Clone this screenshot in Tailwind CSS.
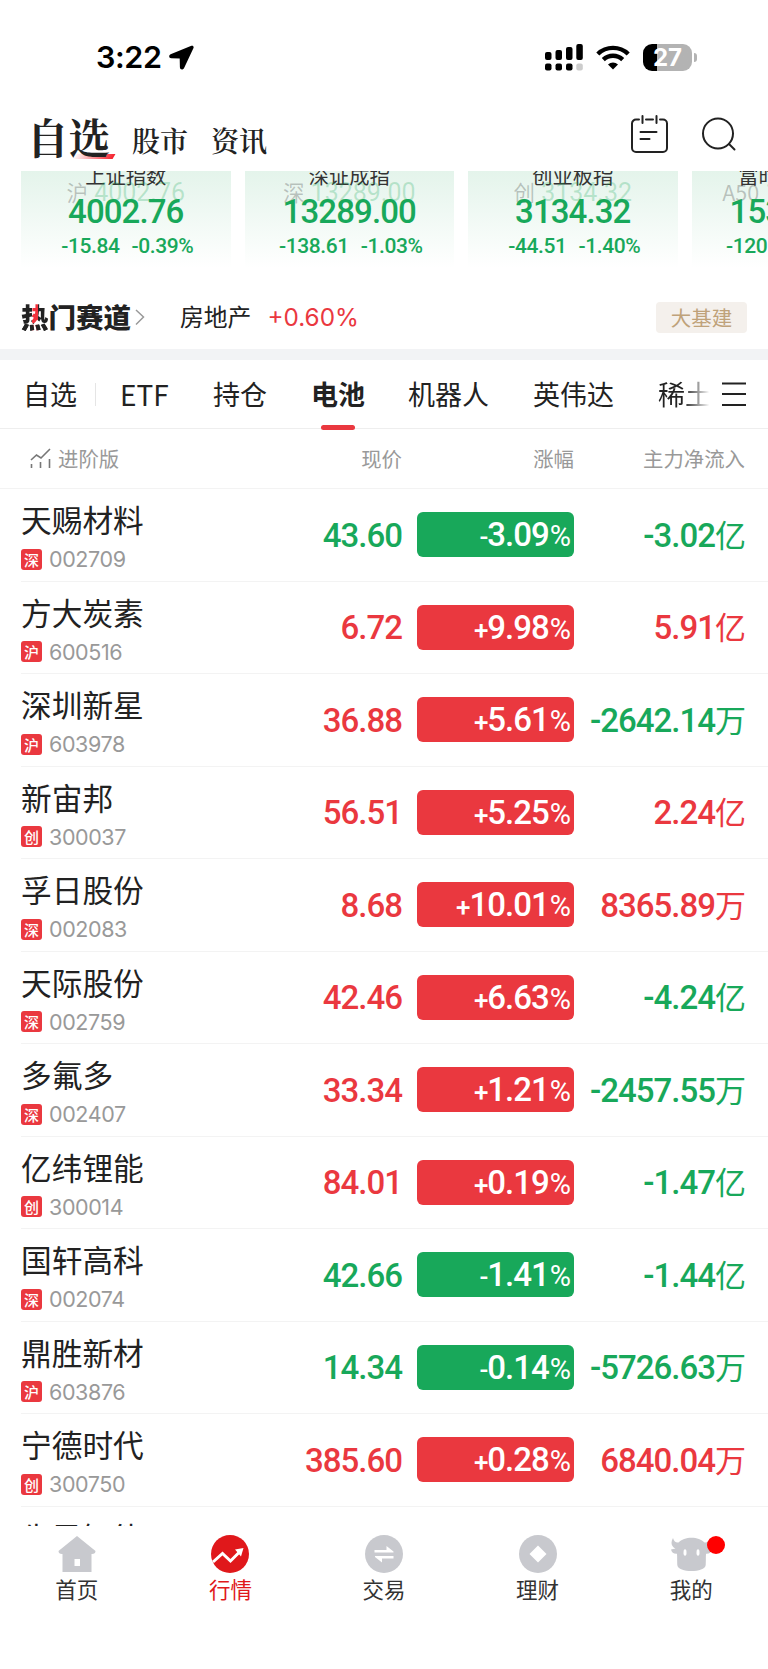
<!DOCTYPE html>
<html lang="zh-CN">
<head>
    <meta charset="UTF-8">
    <meta name="viewport" content="width=device-width, initial-scale=1.0">
    <title>行情 - 自选</title>
    <script src="https://cdn.jsdelivr.net/npm/@tailwindcss/browser@4"></script>
</head>
<body class="bg-white text-[#222] font-['Noto_Sans_CJK_SC',sans-serif] w-[768px] h-[1669px] overflow-hidden flex flex-col">

    <!-- status bar -->
    <div class="h-[100px] shrink-0 flex items-start justify-between pl-[96px] pr-[71px] pt-[41px] text-black">
        <div class="flex items-center gap-[7px] h-[32px]">
            <span class="font-['Inter',sans-serif] font-semibold text-[30.5px] leading-[32px] tracking-[-0.4px]">3:22</span>
            <svg class="w-[25px] h-[25px]" viewBox="0 0 25 25"><path d="M22.4.8 1.6 9.2c-2.200 1-1.700 4 .6 4.100l8.500.2.200 8.700c.1 2.600 3 3.100 4.200.8L24.500 3C25 1.200 23.900.2 22.400.8z" fill="#000"/></svg>
        </div>
        <div class="flex items-center gap-[13px] h-[32px]">
            <svg class="w-[38px] h-[27px]" viewBox="0 0 38 27">
                <rect x="0" y="8" width="6.5" height="8" rx="2"/><rect x="10.5" y="6" width="6.5" height="10" rx="2"/><rect x="21" y="3" width="6.5" height="13" rx="2"/><rect x="31.3" y="0" width="6.5" height="16" rx="2"/>
                <rect x="0" y="19.5" width="6.5" height="7" rx="2"/><rect x="10.5" y="19.5" width="6.5" height="7" rx="2"/><rect x="21" y="19.5" width="6.5" height="7" rx="2"/><rect x="31.3" y="19.5" width="6.5" height="7" rx="2" fill="#ccc"/>
            </svg>
            <svg class="w-[34px] h-[25px]" viewBox="0 0 34 25" fill="none" stroke="#000" stroke-width="4.4">
                <path d="M1.8 9a22 22 0 0 1 30.4 0"/><path d="M7.3 14.700a14 14 0 0 1 19.4 0"/><path d="M17 24.500l-5-5a7.300 7.300 0 0 1 10 0z" fill="#000" stroke="none"/>
            </svg>
            <div class="flex items-center gap-[2px]">
                <div class="w-[49px] h-[27px] rounded-[9px] bg-linear-to-r from-black from-[28%] to-[#b3b3b3] to-[28%] text-white font-['Inter',sans-serif] font-bold text-[24px] leading-[27px] text-center">27</div>
                <div class="w-[3px] h-[9px] rounded-r-full bg-[#b3b3b3]"></div>
            </div>
        </div>
    </div>

    <!-- page header -->
    <header class="h-[71px] shrink-0 flex justify-between pl-[27px] pr-[32px] font-['Noto_Serif_CJK_SC','Noto_Serif_SC','Noto_Sans_CJK_SC',serif]">
        <div class="flex items-end gap-[22px] h-[58px]">
            <div class="relative">
                <div class="absolute right-[-4px] bottom-[-1px] w-[40px] h-[5px] bg-linear-to-r from-transparent to-[#f5222d] skew-x-[-30deg]"></div>
                <span class="relative block text-[41.5px] leading-[44px] font-bold">自选</span>
            </div>
            <span class="text-[28px] leading-[36px] font-semibold">股市</span>
            <span class="text-[28px] leading-[36px] font-semibold ml-px">资讯</span>
        </div>
        <div class="flex items-start gap-[34px] pt-[15px]">
            <svg class="w-[37px] h-[38px]" viewBox="0 0 37 38" fill="none" stroke="#222" stroke-width="2" stroke-linecap="round">
                <path d="M8 4.500H5a4 4 0 0 0-4 4V33a4 4 0 0 0 4 4h27a4 4 0 0 0 4-4V8.500a4 4 0 0 0-4-4h-3M15 4.500h7M11.500 1v7M25.500 1v7M9.500 17h16M9.500 24h9"/>
            </svg>
            <svg class="w-[34px] h-[38px]" viewBox="0 0 34 38" fill="none" stroke="#222" stroke-width="2" stroke-linecap="round">
                <circle cx="16" cy="18.5" r="15"/><path d="M27 29l5.500 5.500"/>
            </svg>
        </div>
    </header>

    <!-- index cards, scrolled partly under the header -->
    <section id="indexes" class="h-[97px] shrink-0 flex gap-[14px] pl-[21px] overflow-hidden"></section>

    <!-- hot track -->
    <section class="h-[81px] shrink-0 flex items-center pl-[21px] pr-[21px] pt-[17px]">
        <h2 class="text-[27.5px] leading-[36px] font-black mt-[-2px]"><span class="bg-[linear-gradient(#0000_68%,#222_68%),linear-gradient(90deg,#222_38%,#f0323c_38%_60%,#222_60%)] bg-clip-text text-transparent">热</span>门赛道</h2>
        <svg class="w-[10px] h-[18px] ml-[4px]" viewBox="0 0 10 18" fill="none" stroke="#999" stroke-width="1.5"><path d="M1 2l7.500 7L1 16.500"/></svg>
        <span class="ml-[35px] mt-[-2px] text-[23.8px]">房地产</span>
        <span class="ml-[16px] font-['Inter',sans-serif] text-[24.3px] text-[#ea383f]">+0.60%</span>
        <span class="ml-auto w-[91px] h-[31px] rounded-[4px] bg-[#f4f0ec] text-[#bfa27a] text-[20.5px] leading-[31px] text-center">大基建</span>
    </section>
    <div class="h-[11px] shrink-0 bg-[#f2f3f5]"></div>

    <!-- group tabs -->
    <nav class="h-[69px] shrink-0 flex items-center pl-[23px] pr-[22px] border-b border-[#eee] text-[27px] whitespace-nowrap">
        <span>自选</span>
        <i class="w-px h-[23px] bg-[#e5e5e5] ml-[18px] mr-[24px]"></i>
        <span class="w-[93px] text-[28px]">ETF</span>
        <span class="mr-[44px]">持仓</span>
        <span class="relative font-bold mr-[43px]">电池<i class="absolute left-[10px] bottom-[-16px] w-[34px] h-[5px] rounded-full bg-[#ea383f]"></i></span>
        <span class="mr-[44px]">机器人</span>
        <span class="mr-[44px]">英伟达</span>
        <span class="w-[54px] bg-linear-to-r from-[#222] from-45% to-white to-95% bg-clip-text text-transparent">稀土</span>
        <svg class="w-[24px] h-[24px] ml-auto" viewBox="0 0 24 24" stroke="#222" stroke-width="2"><path d="M0 1.500h24M0 12h24M0 23h24"/></svg>
    </nav>

    <!-- column titles -->
    <div class="h-[60px] shrink-0 grid grid-cols-[381px_172px_171px] items-center pl-[21px] border-b border-[#f3f3f3] text-[20.4px] text-[#999]">
        <div class="flex items-center justify-between">
            <span class="flex items-center gap-[7px] pl-[9px]">
                <svg class="w-[21px] h-[20px]" viewBox="0 0 21 20" fill="none" stroke="#777" stroke-width="1.6"><path d="M1 12l5.500-5 4.500 3 9-9M1.500 16v4M10.500 14v6M19.500 11v9"/></svg>进阶版
            </span>
            <span>现价</span>
        </div>
        <span class="text-right">涨幅</span>
        <span class="text-right">主力净流入</span>
    </div>

    <main id="stocks" class="h-[1037px] shrink-0 overflow-hidden"></main>

    <!-- bottom navigation -->
    <footer class="grow grid grid-cols-5 text-[21.5px] leading-[31px] text-[#333] text-center">
        <a class="flex flex-col items-center pt-[9px]">
            <svg class="w-[38px] h-[38px]" viewBox="0 0 38 38" fill="#c8c9ce"><path fill-rule="evenodd" d="M19 1L.5 16q0 3 3.500 3h.5v18h29V19h.5q3.500 0 3.500-3zM16.500 24h5.500v7h-5.500z"/></svg>
            首页
        </a>
        <a class="flex flex-col items-center pt-[9px] text-[#e0181b]">
            <svg class="w-[38px] h-[38px]" viewBox="0 0 38 38"><circle cx="19" cy="19" r="19" fill="#e0181b"/><path d="M2 27l9.500-8.500 8 7.500L29 16.500" fill="none" stroke="#fff" stroke-width="3"/><path d="M24 14.500L32.500 13l-2.500 8.500z" fill="#fff"/></svg>
            行情
        </a>
        <a class="flex flex-col items-center pt-[9px]">
            <svg class="w-[38px] h-[38px]" viewBox="0 0 38 38"><circle cx="19" cy="19" r="19" fill="#c8c9ce"/><path d="M9.500 15h12V11l7 5.500v1h-19zM28.500 23.500h-11.500v4l-7-5.500v-1h18.500z" fill="#fff"/></svg>
            交易
        </a>
        <a class="flex flex-col items-center pt-[9px]">
            <svg class="w-[38px] h-[38px]" viewBox="0 0 38 38"><circle cx="19" cy="19" r="19" fill="#c8c9ce"/><path d="M19 10.500l8.500 8.500-8.500 8.500-8.500-8.500z" fill="#fff"/></svg>
            理财
        </a>
        <a class="flex flex-col items-center pt-[9px]">
            <span class="relative">
                <svg class="w-[41px] h-[38px]" viewBox="0 0 41 38"><path d="M2 3C-.5 7 0 11.500 4.500 13.500L0 14.500c.5 3 3 4.500 6 4.200.3 4 0 6 .3 11.300C7 38 34 38 34.700 30c.3-5.300 0-7.300.3-11.300 3 .3 5.500-1.200 6-4.200l-4.500-1C41 11.500 41.500 7 39 3c-1 3.500-3 5-5.500 4.500C28 1 13 1 7.500 7.500 5 8 3 6.500 2 3z" fill="#c8c9ce"/><ellipse cx="14" cy="17.500" rx="1.500" ry="3.200" fill="#fff"/><ellipse cx="27" cy="17.500" rx="1.500" ry="3.200" fill="#fff"/></svg>
                <i class="absolute left-[36px] top-[1px] w-[18px] h-[18px] rounded-full bg-[#ff0000]"></i>
            </span>
            我的
        </a>
    </footer>

    <script>
        const indexes = [
            ["上证指数", "沪", "4002.76", "-15.84", "-0.39%"],
            ["深证成指", "深", "13289.00", "-138.61", "-1.03%"],
            ["创业板指", "创", "3134.32", "-44.51", "-1.40%"],
            ["富时中国A50", "A50", "15320.19", "-120.49", "-0.78%"],
        ];

        const stocks = [
            ["天赐材料", "深", "002709", "43.60", "-3.09", "-3.02亿"],
            ["方大炭素", "沪", "600516", "6.72", "+9.98", "5.91亿"],
            ["深圳新星", "沪", "603978", "36.88", "+5.61", "-2642.14万"],
            ["新宙邦", "创", "300037", "56.51", "+5.25", "2.24亿"],
            ["孚日股份", "深", "002083", "8.68", "+10.01", "8365.89万"],
            ["天际股份", "深", "002759", "42.46", "+6.63", "-4.24亿"],
            ["多氟多", "深", "002407", "33.34", "+1.21", "-2457.55万"],
            ["亿纬锂能", "创", "300014", "84.01", "+0.19", "-1.47亿"],
            ["国轩高科", "深", "002074", "42.66", "-1.41", "-1.44亿"],
            ["鼎胜新材", "沪", "603876", "14.34", "-0.14", "-5726.63万"],
            ["宁德时代", "创", "300750", "385.60", "+0.28", "6840.04万"],
            ["先导智能", "创", "300450", "", "", ""],
        ];

        document.getElementById("indexes").innerHTML = indexes.map(([name, mark, value, diff, pct]) => `
            <div class="relative w-[209.5px] h-[97px] shrink-0 bg-linear-to-b from-[#e4f4eb] to-white text-center text-[#18a85a] font-['Roboto',sans-serif] font-medium whitespace-nowrap">
                <p class="h-[22px] mt-[-7px] text-[20.3px] leading-[22px] text-[#333] font-normal font-['Noto_Sans_CJK_SC',sans-serif]">${name}</p>
                <p class="absolute inset-x-0 top-[6px] text-[25px] leading-[30px] font-normal text-[#18a85a]/25"><span class="text-[21.5px] text-[#222]/25 font-['Noto_Sans_CJK_SC',sans-serif]">${mark}</span> ${value}</p>
                <p class="relative mt-[10px] text-[33px] leading-[32px] tracking-[-0.9px]">${value}</p>
                <p class="mt-[6px] text-[21px] leading-[24px] tracking-[-0.4px] flex justify-center gap-[12px] pl-[3px]"><span>${diff}</span><span>${pct}</span></p>
            </div>`).join("");

        document.getElementById("stocks").innerHTML = stocks.map(([name, mark, code, price, rate, flow]) => {
            const color = rate[0] === "-" ? "text-[#18a85a]" : "text-[#ea383f]";
            const pill = rate[0] === "-" ? "bg-[#18a85a]" : "bg-[#ea383f]";
            const flowColor = flow[0] === "-" ? "text-[#18a85a]" : "text-[#ea383f]";
            return `
            <div class="h-[92.5px] ml-[21px] grid grid-cols-[381px_172px_172px] items-center border-b border-[#f3f3f3] font-['Roboto',sans-serif] font-medium text-[33px] leading-[40px] tracking-[-1px]">
                <div class="flex items-center justify-between">
                    <div class="font-normal tracking-normal pt-[9px]">
                        <p class="text-[30.7px] leading-[40px] font-['Noto_Sans_CJK_SC',sans-serif]">${name}</p>
                        <p class="flex items-center gap-[7px] h-[40px]">
                            <i class="not-italic w-[21px] h-[21px] rounded-[3px] bg-[#ea383f] text-white text-[15px] leading-[21px] text-center font-medium font-['Noto_Sans_CJK_SC',sans-serif]">${mark}</i>
                            <span class="font-['Inter',sans-serif] text-[21.5px] leading-[24px] tracking-[-0.4px] text-[#999]">${code}</span>
                        </p>
                    </div>
                    <span class="pt-[2px] ${color}">${price}</span>
                </div>
                <div class="ml-[15px] h-[45px] rounded-[6px] pr-[4px] leading-[46px] text-right text-white ${pill}"><span class="text-[26px]">${rate.slice(0, 1)}</span>${rate.slice(1)}<span class="text-[29px] font-normal ml-px">%</span></div>
                <span class="text-right pt-[2px] ${flowColor}">${flow.slice(0, -1)}<span class="text-[31px] leading-[30px] tracking-normal font-normal font-['Noto_Sans_CJK_SC',sans-serif]">${flow.slice(-1)}</span></span>
            </div>`;
        }).join("");
    </script>
</body>
</html>
